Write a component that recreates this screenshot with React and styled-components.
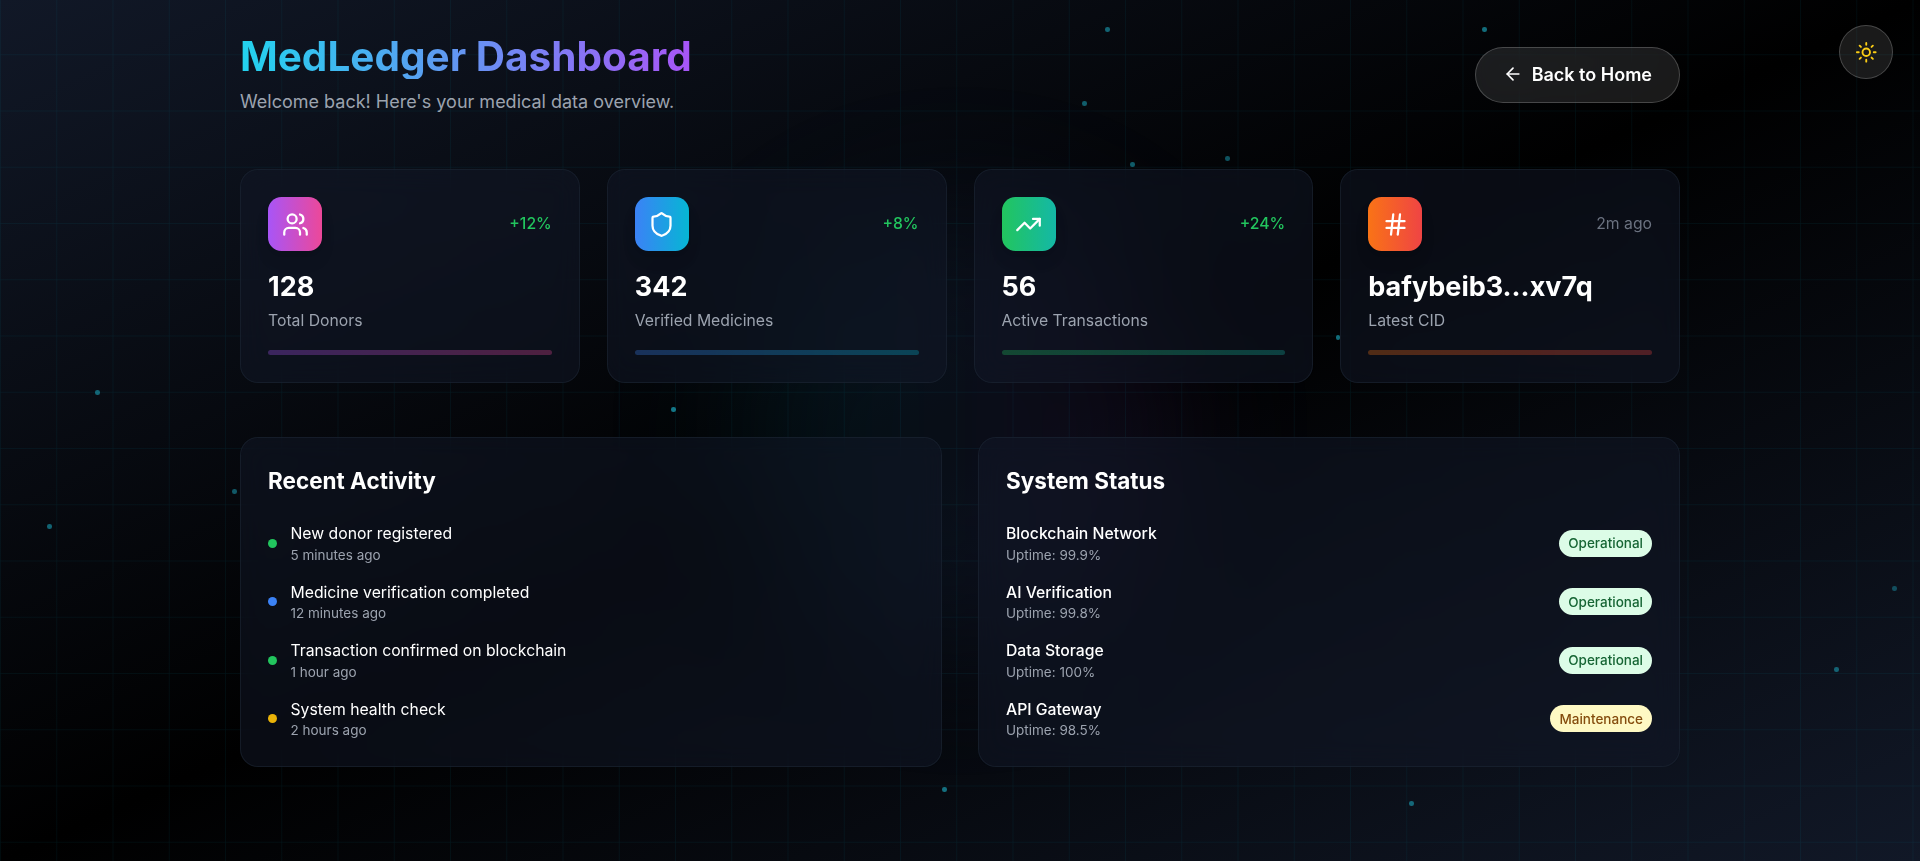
import React from "react";
import styled, { createGlobalStyle } from "styled-components";
import { ArrowLeft, Hash, Shield, Sun, TrendingUp, Users } from "lucide-react";

const GlobalStyle = createGlobalStyle`
  *, *::before, *::after { box-sizing: border-box; }
  html { font-size: 18px; }
  body {
    margin: 0;
    background: #000;
    font-family: Inter, "Liberation Sans", sans-serif;
    line-height: 1.5;
    overflow: hidden;
  }
  h1, h2, p { margin: 0; }
  button { font: inherit; cursor: pointer; }
`;

const Page = styled.div`
  position: relative;
  min-height: 100vh;
  overflow: hidden;
  color: #fff;
  background: linear-gradient(to bottom right, #111827, #000, #111827);
`;

const Backdrop = styled.div`
  position: absolute;
  inset: 0;
  pointer-events: none;
`;

const GridLines = styled.div`
  position: absolute;
  inset: 0;
  opacity: 0.1;
  background-image:
    linear-gradient(rgba(6, 182, 212, 0.6) 1px, transparent 1px),
    linear-gradient(90deg, rgba(6, 182, 212, 0.6) 1px, transparent 1px);
  background-size: 56.25px 56.25px;
  background-position: 0 -2px;
`;

const Glow = styled.div`
  position: absolute;
  top: 50%;
  left: 50%;
  width: 24rem;
  height: 24rem;
  transform: translate(-50%, -50%);
  border-radius: 50%;
  background: linear-gradient(to right, rgba(6, 182, 212, 0.1), rgba(168, 85, 247, 0.1));
  filter: blur(72px);
`;

const Particle = styled.span`
  position: absolute;
  left: ${(p) => p.$x}px;
  top: ${(p) => p.$y}px;
  width: 0.25rem;
  height: 0.25rem;
  border-radius: 50%;
  background: #22d3ee;
  opacity: ${(p) => p.$o};
`;

const Content = styled.main`
  position: relative;
  width: 80rem;
  margin: 0 auto;
  padding: 34px 0 2rem;
`;

const Header = styled.header`
  display: flex;
  align-items: center;
  justify-content: space-between;
  margin-bottom: 3rem;
`;

const Title = styled.h1`
  margin-bottom: 0.5rem;
  font-size: 2.25rem;
  line-height: 2.5rem;
  font-weight: 700;
  color: transparent;
  background: linear-gradient(to right, #22d3ee, #a855f7);
  background-clip: text;
  -webkit-background-clip: text;
`;

const Heading = styled.div`
  width: max-content;
`;

const Subtitle = styled.p`
  color: #9ca3af;
`;

const BackButton = styled.button`
  display: flex;
  align-items: center;
  gap: 0.5rem;
  padding: 0.75rem 1.5rem;
  border: 1px solid rgba(255, 255, 255, 0.2);
  border-radius: 999px;
  background: rgba(255, 255, 255, 0.1);
  backdrop-filter: blur(12px);
  color: #fff;
  font-weight: 600;
  line-height: 1.5rem;

  svg { width: 20px; height: 20px; margin-top: -2px; }
`;

const ThemeToggle = styled.button`
  position: absolute;
  top: 25px;
  right: 1.5rem;
  display: grid;
  place-items: center;
  width: 3rem;
  height: 3rem;
  padding: 0;
  border: 1px solid rgba(255, 255, 255, 0.2);
  border-radius: 50%;
  background: rgba(255, 255, 255, 0.1);
  color: #facc15;

  svg { width: 1.25rem; height: 1.25rem; }
`;

const StatGrid = styled.section`
  display: grid;
  grid-template-columns: repeat(4, 1fr);
  gap: 1.5rem;
  margin-bottom: 3rem;
`;

const Card = styled.article`
  padding: 1.5rem;
  border: 1px solid rgba(31, 41, 55, 0.5);
  border-radius: 1rem;
  background: rgba(17, 24, 39, 0.5);
  backdrop-filter: blur(14px);
`;

const StatTop = styled.div`
  display: flex;
  align-items: center;
  justify-content: space-between;
  margin-bottom: 1rem;
`;

const IconTile = styled.div`
  display: grid;
  place-items: center;
  width: 3rem;
  height: 3rem;
  border-radius: 0.75rem;
  background: linear-gradient(to right, ${(p) => p.$from}, ${(p) => p.$to});
  box-shadow: 0 11px 17px -3px rgba(0, 0, 0, 0.1), 0 4px 7px -4px rgba(0, 0, 0, 0.1);

  svg { width: 1.5rem; height: 1.5rem; }
`;

const Change = styled.span`
  font-size: 0.875rem;
  line-height: 1.25rem;
  font-weight: ${(p) => (p.$muted ? 400 : 500)};
  color: ${(p) => (p.$muted ? "#6b7280" : "#22c55e")};
`;

const Value = styled.p`
  margin-bottom: 0.25rem;
  font-size: 1.5rem;
  line-height: 2rem;
  font-weight: 700;
`;

const Label = styled.p`
  font-size: 0.875rem;
  line-height: 1.25rem;
  color: #9ca3af;
`;

const Bar = styled.div`
  height: 0.25rem;
  margin-top: 1rem;
  border-radius: 999px;
  background: linear-gradient(to right, ${(p) => p.$from}, ${(p) => p.$to});
  opacity: 0.3;
`;

const PanelGrid = styled.section`
  display: grid;
  grid-template-columns: 1fr 1fr;
  gap: 2rem;
`;

const PanelTitle = styled.h2`
  margin-bottom: 1.5rem;
  font-size: 1.25rem;
  line-height: 1.75rem;
  font-weight: 700;
`;

const List = styled.div`
  display: flex;
  flex-direction: column;
  gap: 1rem;
`;

const Row = styled.div`
  display: flex;
  align-items: center;
  gap: 0.75rem;
`;

const Dot = styled.span`
  width: 0.5rem;
  height: 0.5rem;
  border-radius: 50%;
  background: ${(p) => p.$color};
`;

const RowText = styled.div`
  flex: 1;
`;

const RowTitle = styled.p`
  font-size: 0.875rem;
  line-height: 1.25rem;
  font-weight: ${(p) => (p.$strong ? 500 : 400)};
`;

const RowNote = styled.p`
  font-size: 0.75rem;
  line-height: 1rem;
  color: #9ca3af;
`;

const Badge = styled.span`
  padding: 0.25rem 0.5rem;
  border-radius: 999px;
  font-size: 0.75rem;
  line-height: 1rem;
  font-weight: 500;
  color: ${(p) => (p.$warn ? "#854d0e" : "#166534")};
  background: ${(p) => (p.$warn ? "#fef9c3" : "#dcfce7")};
`;

const particles = [
  [1105, 27, 0.45], [1482, 27, 0.5], [1082, 101, 0.42], [1130, 162, 0.42],
  [1225, 156, 0.38], [1335.5, 335, 0.5], [95, 390, 0.45], [671.25, 407, 0.55],
  [232, 489, 0.4], [47, 524, 0.45], [942, 787, 0.5], [1409, 801, 0.45],
  [1834, 667, 0.42], [1892, 586, 0.32],
];

const stats = [
  { icon: Users, value: "128", label: "Total Donors", change: "+12%", from: "#a855f7", to: "#ec4899" },
  { icon: Shield, value: "342", label: "Verified Medicines", change: "+8%", from: "#3b82f6", to: "#06b6d4" },
  { icon: TrendingUp, value: "56", label: "Active Transactions", change: "+24%", from: "#22c55e", to: "#14b8a6" },
  { icon: Hash, value: "bafybeib3...xv7q", label: "Latest CID", change: "2m ago", muted: true, from: "#f97316", to: "#ef4444" },
];

const activity = [
  { title: "New donor registered", time: "5 minutes ago", color: "#22c55e" },
  { title: "Medicine verification completed", time: "12 minutes ago", color: "#3b82f6" },
  { title: "Transaction confirmed on blockchain", time: "1 hour ago", color: "#22c55e" },
  { title: "System health check", time: "2 hours ago", color: "#eab308" },
];

const services = [
  { name: "Blockchain Network", uptime: "99.9%", status: "Operational" },
  { name: "AI Verification", uptime: "99.8%", status: "Operational" },
  { name: "Data Storage", uptime: "100%", status: "Operational" },
  { name: "API Gateway", uptime: "98.5%", status: "Maintenance" },
];

export default function App() {
  return (
    <Page>
      <GlobalStyle />
      <Backdrop>
        <GridLines />
        <Glow />
        {particles.map(([x, y, o]) => (
          <Particle key={`${x}-${y}`} $x={x} $y={y} $o={o} />
        ))}
      </Backdrop>
      <Content>
        <Header>
          <Heading>
            <Title>MedLedger Dashboard</Title>
            <Subtitle>Welcome back! Here's your medical data overview.</Subtitle>
          </Heading>
          <BackButton>
            <ArrowLeft />
            Back to Home
          </BackButton>
        </Header>
        <StatGrid>
          {stats.map(({ icon: Icon, ...s }) => (
            <Card key={s.label}>
              <StatTop>
                <IconTile $from={s.from} $to={s.to}>
                  <Icon />
                </IconTile>
                <Change $muted={s.muted}>{s.change}</Change>
              </StatTop>
              <Value>{s.value}</Value>
              <Label>{s.label}</Label>
              <Bar $from={s.from} $to={s.to} />
            </Card>
          ))}
        </StatGrid>
        <PanelGrid>
          <Card>
            <PanelTitle>Recent Activity</PanelTitle>
            <List>
              {activity.map((a) => (
                <Row key={a.title}>
                  <Dot $color={a.color} />
                  <RowText>
                    <RowTitle>{a.title}</RowTitle>
                    <RowNote>{a.time}</RowNote>
                  </RowText>
                </Row>
              ))}
            </List>
          </Card>
          <Card>
            <PanelTitle>System Status</PanelTitle>
            <List>
              {services.map((s) => (
                <Row key={s.name}>
                  <RowText>
                    <RowTitle $strong>{s.name}</RowTitle>
                    <RowNote>Uptime: {s.uptime}</RowNote>
                  </RowText>
                  <Badge $warn={s.status === "Maintenance"}>{s.status}</Badge>
                </Row>
              ))}
            </List>
          </Card>
        </PanelGrid>
      </Content>
      <ThemeToggle aria-label="Toggle theme">
        <Sun />
      </ThemeToggle>
    </Page>
  );
}
